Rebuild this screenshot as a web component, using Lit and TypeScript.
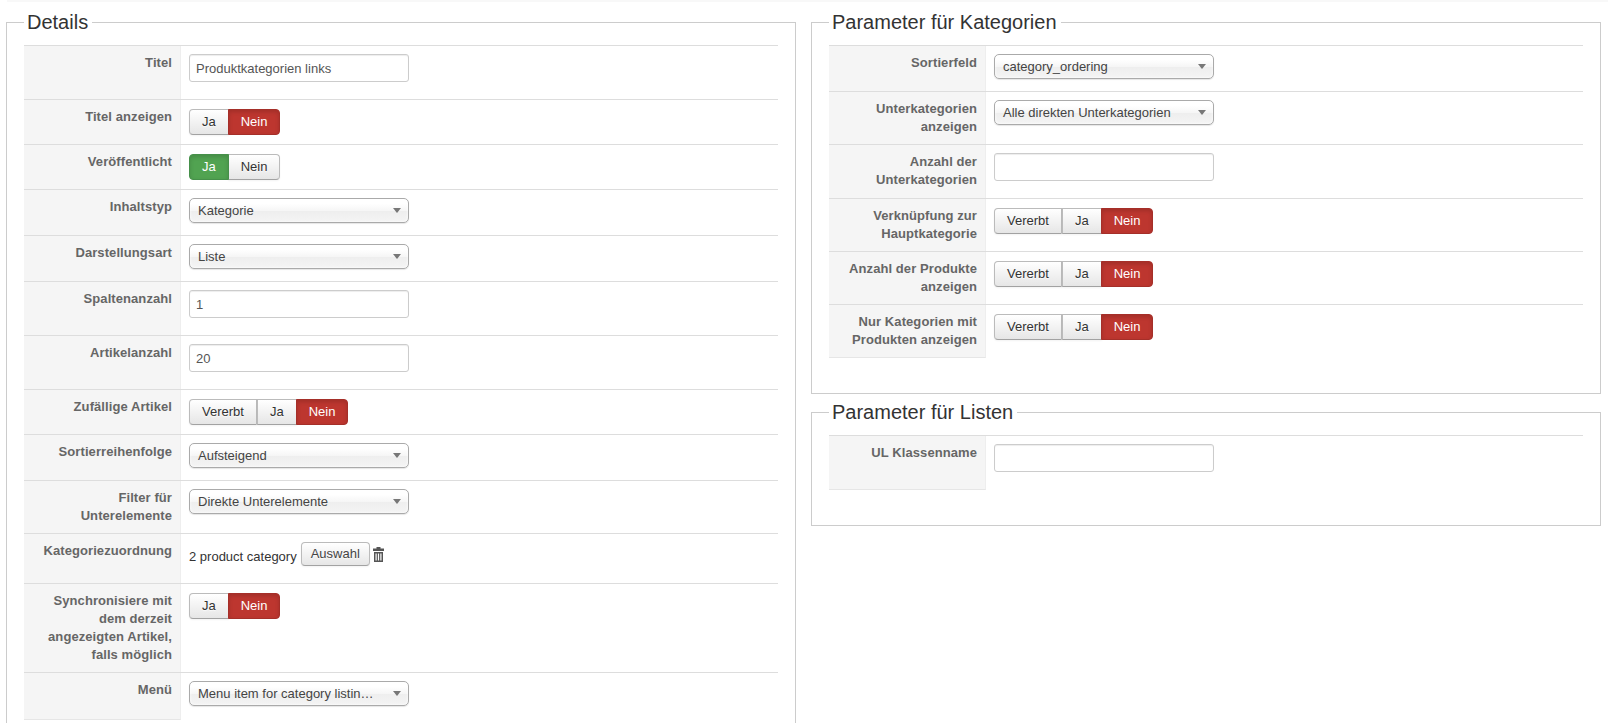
import { LitElement, html, css, nothing } from "lit";
import { customElement } from "lit/decorators.js";

type Control =
  | { kind: "input"; value: string }
  | { kind: "select"; value: string }
  | { kind: "toggle"; options: string[]; active: string; tone: "red" | "green" }
  | { kind: "category" };

interface Row {
  label: string;
  height: number;
  control: Control;
}

const input = (value = ""): Control => ({ kind: "input", value });
const select = (value: string): Control => ({ kind: "select", value });
const no2: Control = { kind: "toggle", options: ["Ja", "Nein"], active: "Nein", tone: "red" };
const no3: Control = { kind: "toggle", options: ["Vererbt", "Ja", "Nein"], active: "Nein", tone: "red" };

const details: Row[] = [
  { label: "Titel", height: 54, control: input("Produktkategorien links") },
  { label: "Titel anzeigen", height: 45, control: no2 },
  { label: "Veröffentlicht", height: 45, control: { kind: "toggle", options: ["Ja", "Nein"], active: "Ja", tone: "green" } },
  { label: "Inhaltstyp", height: 46, control: select("Kategorie") },
  { label: "Darstellungsart", height: 46, control: select("Liste") },
  { label: "Spaltenanzahl", height: 54, control: input("1") },
  { label: "Artikelanzahl", height: 54, control: input("20") },
  { label: "Zufällige Artikel", height: 45, control: no3 },
  { label: "Sortierreihenfolge", height: 46, control: select("Aufsteigend") },
  { label: "Filter für Unterelemente", height: 53, control: select("Direkte Unterelemente") },
  { label: "Kategoriezuordnung", height: 50, control: { kind: "category" } },
  { label: "Synchronisiere mit dem derzeit angezeigten Artikel, falls möglich", height: 89, control: no2 },
  { label: "Menü", height: 48, control: select("Menu item for category listin…") },
];

const categories: Row[] = [
  { label: "Sortierfeld", height: 46, control: select("category_ordering") },
  { label: "Unterkategorien anzeigen", height: 53, control: select("Alle direkten Unterkategorien") },
  { label: "Anzahl der Unterkategorien", height: 54, control: input() },
  { label: "Verknüpfung zur Hauptkategorie", height: 53, control: no3 },
  { label: "Anzahl der Produkte anzeigen", height: 53, control: no3 },
  { label: "Nur Kategorien mit Produkten anzeigen", height: 54, control: no3 },
];

const lists: Row[] = [{ label: "UL Klassenname", height: 55, control: input() }];

@customElement("app-root")
export class AppRoot extends LitElement {
  static styles = css`
    :host {
      display: block;
      height: 723px;
      overflow: hidden;
      background: #fff;
      font-family: "Liberation Sans", Arial, sans-serif;
      font-size: 13px;
      line-height: 18px;
      color: #333;
    }
    .strip {
      height: 2px;
      margin-left: 7px;
      background: #f8f8f8;
    }
    .page {
      display: grid;
      grid-template-columns: 790px 790px;
      column-gap: 15px;
      padding: 4px 0 0 6px;
      align-items: start;
    }
    .column {
      display: flex;
      flex-direction: column;
      gap: 2px;
    }
    fieldset {
      margin: 0;
      min-width: 0;
      padding: 7px 17px 35px;
      border: 1px solid #ccc;
    }
    .tall {
      min-height: 800px;
    }
    legend {
      padding: 0 4px 0 3px;
      font-size: 20px;
      line-height: 32px;
      color: #333;
    }
    .row {
      display: grid;
      grid-template-columns: 157px 1fr;
      box-sizing: border-box;
      border-top: 1px solid #ddd;
    }
    .label {
      box-sizing: border-box;
      padding: 8px 8px 0 4px;
      background: #f5f5f5;
      border-right: 1px solid #eee;
      text-align: right;
      font-weight: bold;
      letter-spacing: 0.08px;
      color: #666;
    }
    .row:last-child .label {
      border-bottom: 1px solid #e6e6e6;
    }
    .cell {
      padding: 8px;
      min-width: 0;
    }
    input {
      display: block;
      box-sizing: border-box;
      width: 220px;
      height: 28px;
      margin: 0;
      padding: 0 6px;
      border: 1px solid #ccc;
      border-radius: 3px;
      box-shadow: inset 0 1px 1px rgba(0, 0, 0, 0.075);
      background: #fff;
      font: inherit;
      color: #555;
      outline: none;
    }
    .select {
      display: flex;
      align-items: center;
      justify-content: space-between;
      box-sizing: border-box;
      width: 220px;
      height: 25px;
      padding: 0 7px 0 8px;
      border: 1px solid #aaa;
      border-radius: 5px;
      background: linear-gradient(#fff 20%, #f6f6f6 50%, #eee 52%, #f4f4f4 100%);
      box-shadow: inset 0 0 3px #fff, 0 1px 1px rgba(0, 0, 0, 0.1);
      color: #444;
      white-space: nowrap;
    }
    .arrow {
      width: 0;
      height: 0;
      flex: none;
      border-left: 4px solid transparent;
      border-right: 4px solid transparent;
      border-top: 5px solid #777;
    }
    .toggle {
      display: inline-flex;
      margin-top: 1px;
      vertical-align: top;
    }
    .btn {
      box-sizing: border-box;
      padding: 3px 12px;
      height: 26px;
      border: 1px solid #bbb;
      border-bottom-color: #a2a2a2;
      background: linear-gradient(#fff, #e6e6e6);
      box-shadow: inset 0 1px 0 rgba(255, 255, 255, 0.2), 0 1px 2px rgba(0, 0, 0, 0.05);
      color: #333;
      text-shadow: 0 1px 1px rgba(255, 255, 255, 0.75);
    }
    .toggle .btn:last-child {
      margin-left: -1px;
      border-radius: 0 4px 4px 0;
    }
    .toggle .btn:first-child {
      border-radius: 4px 0 0 4px;
    }
    .btn.red {
      background: #bd362f;
      border-color: #a52f29;
      color: #fff;
      text-shadow: none;
      box-shadow: inset 0 2px 4px rgba(0, 0, 0, 0.15);
      position: relative;
    }
    .btn.green {
      background: #51a351;
      border-color: #46904a;
      color: #fff;
      text-shadow: none;
      box-shadow: inset 0 2px 4px rgba(0, 0, 0, 0.15);
      position: relative;
    }
    .category {
      display: flex;
      align-items: flex-start;
    }
    .category-name {
      margin-top: 6px;
      margin-right: 4px;
      color: #333;
    }
    .pick {
      height: 24px;
      padding: 2px 9px;
      border-radius: 4px;
      color: #444;
    }
    .trash {
      width: 11px;
      height: 15px;
      margin: 5px 0 0 3px;
      fill: #555;
    }
  `;

  private control(c: Control) {
    switch (c.kind) {
      case "input":
        return html`<input type="text" .value=${c.value} />`;
      case "select":
        return html`<div class="select"><span>${c.value}</span><span class="arrow"></span></div>`;
      case "toggle":
        return html`<div class="toggle">
          ${c.options.map(
            (o) => html`<div class="btn ${o === c.active ? c.tone : ""}">${o}</div>`
          )}
        </div>`;
      case "category":
        return html`<div class="category">
          <span class="category-name">2 product category</span>
          <div class="btn pick">Auswahl</div>
          <svg class="trash" viewBox="0 0 11 15" aria-hidden="true">
            <path d="M3.5 0h4v1.5h3.5v2.5H0V1.5h3.5z" />
            <path d="M1 5h9v10H1zM2.5 6.5v7h1.2v-7zM4.9 6.5v7h1.2v-7zM7.3 6.5v7h1.2v-7z" fill-rule="evenodd" />
          </svg>
        </div>`;
      default:
        return nothing;
    }
  }

  private rows(rows: Row[]) {
    return rows.map(
      (r) => html`<div class="row" style="height:${r.height}px">
        <div class="label">${r.label}</div>
        <div class="cell">${this.control(r.control)}</div>
      </div>`
    );
  }

  render() {
    return html`
      <div class="strip"></div>
      <div class="page">
        <fieldset class="tall">
          <legend>Details</legend>
          ${this.rows(details)}
        </fieldset>
        <div class="column">
          <fieldset>
            <legend>Parameter für Kategorien</legend>
            ${this.rows(categories)}
          </fieldset>
          <fieldset>
            <legend>Parameter für Listen</legend>
            ${this.rows(lists)}
          </fieldset>
        </div>
      </div>
    `;
  }
}
